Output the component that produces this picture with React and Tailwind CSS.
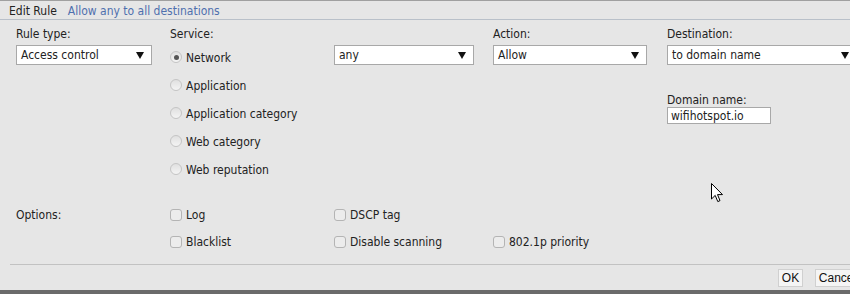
import React from 'react';

const font = { fontFamily: '"DejaVu Sans Condensed", "DejaVu Sans", Tahoma, sans-serif' };

function Arrow() {
    return (
        <svg width="8" height="7" viewBox="0 0 8 7" className="shrink-0">
            <path d="M0 0 H8 L4 7 Z" fill="#111" />
        </svg>
    );
}

function Select({ value, className }) {
    return (
        <div className={`h-[20px] bg-white border border-[#a8a8a8] flex items-center justify-between pl-[4px] pr-[7px] ${className}`}>
            <span className="text-[12px] text-[#222]">{value}</span>
            <Arrow />
        </div>
    );
}

function Radio({ label, checked }) {
    return (
        <div className="h-[28px] flex items-center gap-[4px]">
            <span className="w-[12px] h-[12px] rounded-full border border-[#c4c4c4] bg-gradient-to-b from-[#e0e0e0] to-[#f4f4f4] flex items-center justify-center -mt-[2px]">
                {checked && <span className="w-[5px] h-[5px] rounded-full bg-[#555]" />}
            </span>
            <span className="text-[12px] text-[#222]">{label}</span>
        </div>
    );
}

function Check({ label }) {
    return (
        <div className="flex items-center gap-[4px]">
            <span className="w-[12px] h-[12px] rounded-[3px] border border-[#b4b4b4] bg-[#ececec]" />
            <span className="text-[12px] text-[#222]">{label}</span>
        </div>
    );
}

export default function App() {
    return (
        <div className="w-[850px] h-[294px] overflow-hidden bg-[#e6e6e6] flex flex-col relative" style={font}>
            <div className="h-px bg-[#a0a0a0] shrink-0" />
            <div className="h-[19px] shrink-0 flex items-center gap-[11px] pl-[9px] pt-px border-b border-[#b9c0c9] text-[12px]">
                <span className="text-[#222]">Edit Rule</span>
                <span className="text-[#4f70ae]">Allow any to all destinations</span>
            </div>

            <div className="flex pl-4 pt-[6px] shrink-0 text-[12px] text-[#222] leading-[16px]">
                <div className="w-[154px] shrink-0 flex flex-col">
                    <div className="h-[16px]">Rule type:</div>
                    <Select value="Access control" className="mt-[3px] w-[136px]" />
                </div>
                <div className="w-[164px] shrink-0 flex flex-col">
                    <div className="h-[16px]">Service:</div>
                    <div className="mt-[2px] flex flex-col">
                        <Radio label="Network" checked />
                        <Radio label="Application" />
                        <Radio label="Application category" />
                        <Radio label="Web category" />
                        <Radio label="Web reputation" />
                    </div>
                </div>
                <div className="w-[159px] shrink-0 flex flex-col">
                    <div className="h-[16px]" />
                    <Select value="any" className="mt-[3px] w-[140px]" />
                </div>
                <div className="w-[174px] shrink-0 flex flex-col">
                    <div className="h-[16px]">Action:</div>
                    <Select value="Allow" className="mt-[3px] w-[154px]" />
                </div>
                <div className="w-[190px] shrink-0 flex flex-col">
                    <div className="h-[16px]">Destination:</div>
                    <Select value="to domain name" className="mt-[3px] w-[190px] shrink-0" />
                    <div className="mt-[28px] leading-[14px]">Domain name:</div>
                    <div className="w-[104px] h-[17px] bg-white border border-[#a8a8a8] pl-[3px] flex items-center">
                        wifihotspot.io
                    </div>
                </div>
            </div>

            <div className="flex flex-col pl-4 mt-[17px] shrink-0 text-[12px] text-[#222]">
                <div className="h-[27px] flex items-center">
                    <div className="w-[154px] shrink-0">Options:</div>
                    <div className="w-[164px] shrink-0"><Check label="Log" /></div>
                    <div className="w-[159px] shrink-0"><Check label="DSCP tag" /></div>
                </div>
                <div className="h-[27px] flex items-center">
                    <div className="w-[154px] shrink-0" />
                    <div className="w-[164px] shrink-0"><Check label="Blacklist" /></div>
                    <div className="w-[159px] shrink-0"><Check label="Disable scanning" /></div>
                    <div className="w-[174px] shrink-0"><Check label="802.1p priority" /></div>
                </div>
            </div>

            <div className="ml-[10px] mt-[9px] h-px bg-[#c2c2c2] shrink-0" />
            <div className="flex justify-end gap-[12px] pt-[4px] shrink-0 -mr-[10px]" style={{ fontFamily: '"Liberation Sans", Arial, sans-serif' }}>
                <button className="h-[18px] w-[25px] bg-[#f5f5f5] border border-[#d0d0d0] text-[12px] text-[#111] leading-none">OK</button>
                <button className="h-[18px] w-[45px] bg-[#f5f5f5] border border-[#d0d0d0] text-[12px] text-[#111] leading-none">Cancel</button>
            </div>
            <div className="mt-auto h-[4px] bg-[#6b6b6b] shrink-0" />

            <svg className="absolute left-[711px] top-[183px]" width="13" height="20" viewBox="0 0 13 20">
                <path d="M0.5 0.5 V16 L4.2 12.4 L6.8 18.6 L9 17.6 L6.5 11.6 L11.5 11.6 Z" fill="#fff" stroke="#000" strokeWidth="1" strokeLinejoin="miter" />
            </svg>
        </div>
    );
}
